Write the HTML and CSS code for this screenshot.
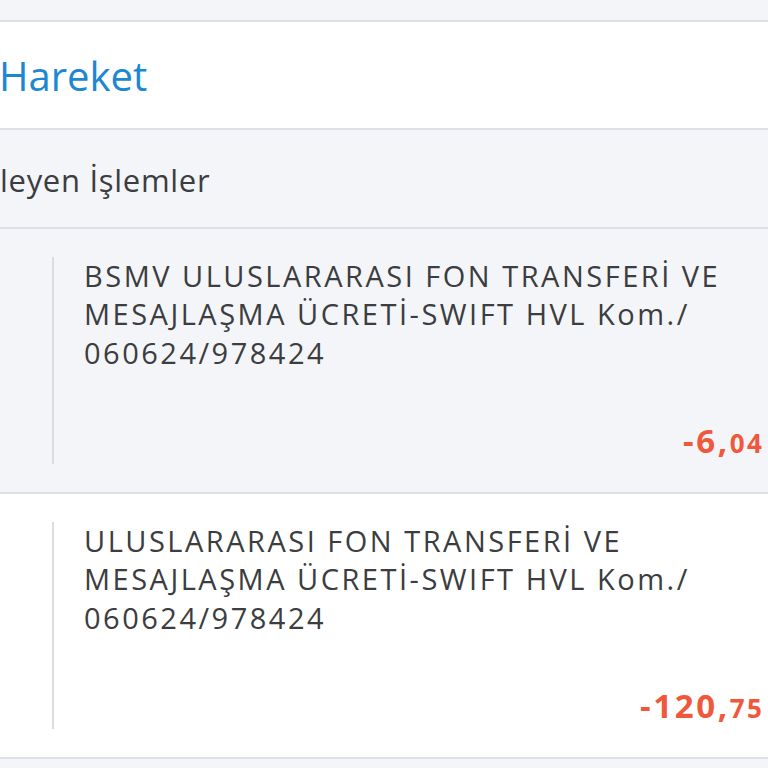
FILE: index.html
```html
<!DOCTYPE html>
<html lang="tr">
<head>
<meta charset="utf-8">
<link rel="stylesheet" href="styles.css">
</head>
<body>
<div class="topstrip"></div>
<header class="header"><h1 class="title">Hareket</h1></header>
<section class="section-head"><h2 class="section-title">leyen İşlemler</h2></section>
<div class="row row-alt">
  <div class="row-inner">
    <p class="desc">BSMV ULUSLARARASI FON TRANSFERİ VE<br>MESAJLAŞMA ÜCRETİ-SWIFT HVL Kom./<br>060624/978424</p>
    <div class="amount"><span class="int">-6,</span><span class="dec">04</span></div>
  </div>
</div>
<div class="row">
  <div class="row-inner">
    <p class="desc">ULUSLARARASI FON TRANSFERİ VE<br>MESAJLAŞMA ÜCRETİ-SWIFT HVL Kom./<br>060624/978424</p>
    <div class="amount"><span class="int">-120,</span><span class="dec">75</span></div>
  </div>
</div>
</body>
</html>
```
FILE: styles.css
```css
html, body {
  margin: 0;
  padding: 0;
}
body {
  background: #f4f5f9;
  font-family: "Open Sans", "Noto Sans", sans-serif;
  color: #3b3d40;
  width: 768px;
  overflow: hidden;
}
.topstrip {
  height: 20px;
  border-bottom: 2px solid #dde1e7;
}
.header {
  background: #ffffff;
  height: 106px;
  border-bottom: 2px solid #dde1e7;
  display: flex;
  align-items: center;
}
.title {
  margin: 0 0 0 -1px;
  font-size: 40px;
  font-weight: 400;
  color: #1d87d1;
  line-height: 1;
  padding-top: 2px;
}
.section-head {
  height: 97px;
  border-bottom: 2px solid #dde1e7;
  display: flex;
  align-items: center;
}
.section-title {
  margin: 0;
  font-size: 31px;
  letter-spacing: 0.7px;
  font-weight: 400;
  color: #3b3d40;
  line-height: 1;
  padding-top: 4px;
}
.row {
  background: #ffffff;
  border-bottom: 2px solid #dde1e7;
  padding: 28px 6px 28px 52px;
}
.row-alt {
  background: #f4f5f9;
}
.row-inner {
  border-left: 2px solid #d9dce1;
  padding-left: 30px;
  height: 207px;
  display: flex;
  flex-direction: column;
}
.desc {
  margin: 0;
  font-size: 29px;
  letter-spacing: 2.5px;
  line-height: 38.3px;
  color: #3b3d40;
}
.amount {
  margin-top: auto;
  align-self: flex-end;
  color: #f0583c;
  font-weight: 700;
  font-size: 33px;
  line-height: 33px;
  letter-spacing: 2.6px;
  padding-bottom: 4px;
  margin-right: -2.6px;
}
.int {
  font-size: 33px;
}
.dec {
  font-size: 26px;
}
```
